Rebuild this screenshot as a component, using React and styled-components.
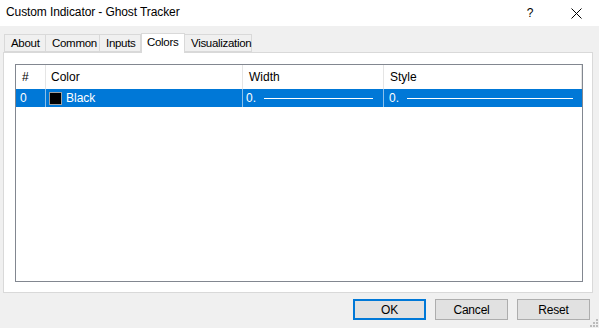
import React from "react"
import styled, { createGlobalStyle } from "styled-components"

const GlobalStyle = createGlobalStyle`
  html, body {
    margin: 0;
    padding: 0;
    background: #f0f0f0;
  }
  body {
    font-family: "Liberation Sans", Arial, sans-serif;
    font-size: 12px;
    color: #000;
  }
`

const Window = styled.div`
  position: relative;
  width: 599px;
  height: 328px;
  display: flex;
  flex-direction: column;
  background: #f0f0f0;
  overflow: hidden;
`

const TitleBar = styled.div`
  height: 26px;
  flex: none;
  display: flex;
  align-items: center;
  background: #fff;
  padding-left: 6px;
`

const TitleText = styled.div`
  flex: 1;
  font-size: 12px;
  letter-spacing: -0.1px;
  padding-bottom: 2px;
`

const CaptionButton = styled.div`
  width: ${p => p.w}px;
  height: 26px;
  display: flex;
  align-items: center;
  justify-content: center;
  font-size: 12px;
`

const Body = styled.div`
  flex: 1;
  display: flex;
  flex-direction: column;
  padding: 7px 6px 0 3px;
`

const TabStrip = styled.div`
  display: flex;
  align-items: flex-end;
  height: 19px;
  padding-left: 1px;
  position: relative;
  z-index: 1;
`

const Tab = styled.div`
  width: ${p => p.w}px;
  height: ${p => (p.active ? 20 : 18)}px;
  margin-bottom: ${p => (p.active ? -1 : 0)}px;
  box-sizing: border-box;
  border: 1px solid #d9d9d9;
  border-bottom: ${p => (p.active ? "none" : "1px solid #d9d9d9")};
  border-left: ${p => (p.first || p.active ? "1px solid #d9d9d9" : "none")};
  background: ${p => (p.active ? "#fff" : "#f0f0f0")};
  padding-left: ${p => (p.active ? 5 : 6)}px;
  padding-top: 2px;
  font-size: 11.5px;
  letter-spacing: -0.3px;
  white-space: nowrap;
`

const TabPanel = styled.div`
  height: 241px;
  box-sizing: border-box;
  border: 1px solid #d9d9d9;
  background: #fff;
  padding: 11px 10px 10px 11px;
  display: flex;
`

const ListBox = styled.div`
  flex: 1;
  border: 1px solid #828790;
  background: #fff;
  display: flex;
  flex-direction: column;
`

const Row = styled.div`
  display: grid;
  grid-template-columns: 30px 197px 141px 198px;
  height: ${p => p.h}px;
  background: ${p => (p.selected ? "#0078d7" : "#fff")};
  color: ${p => (p.selected ? "#fff" : "#000")};
`

const HeaderCell = styled.div`
  display: flex;
  align-items: center;
  padding-left: ${p => p.pad}px;
  border-right: 1px solid #e5e5e5;
  padding-bottom: 1px;
`

const Cell = styled.div`
  display: flex;
  align-items: center;
  gap: 4px;
  padding-left: ${p => p.pad}px;
  padding-right: ${p => p.padR || 0}px;
  border-right: 1px solid ${p => (p.last ? "transparent" : "#8cc0ea")};
  overflow: hidden;
`

const Swatch = styled.span`
  width: 11px;
  height: 11px;
  border: 1px solid #a0a0a0;
  background: ${p => p.color};
  flex: none;
`

const LineSample = styled.span`
  flex: 1;
  height: 1px;
  background: #fff;
  margin-left: 4px;
`

const Footer = styled.div`
  flex: 1;
  display: flex;
  justify-content: flex-end;
  align-items: flex-start;
  gap: 9px;
  padding: 6px 3px 0 0;
`

const Button = styled.button`
  width: 73px;
  height: 21px;
  box-sizing: border-box;
  background: #e1e1e1;
  border: ${p => (p.primary ? "2px solid #0078d7" : "1px solid #adadad")};
  font-family: "Liberation Sans", Arial, sans-serif;
  font-size: 12px;
  color: #000;
  padding: 0;
  letter-spacing: -0.2px;
`

const Grip = styled.svg`
  position: absolute;
  right: 1px;
  bottom: 1px;
`

const tabs = [
  { label: "About", w: 42 },
  { label: "Common", w: 54 },
  { label: "Inputs", w: 41 },
  { label: "Colors", w: 44, active: true },
  { label: "Visualization", w: 67 },
]

const headers = [
  { label: "#", pad: 6 },
  { label: "Color", pad: 5 },
  { label: "Width", pad: 6 },
  { label: "Style", pad: 6 },
]

export default function App() {
  return (
    <Window>
      <GlobalStyle />
      <TitleBar>
        <TitleText>Custom Indicator - Ghost Tracker</TitleText>
        <CaptionButton w={46}>?</CaptionButton>
        <CaptionButton w={46}>
          <svg width="11" height="11" viewBox="0 0 11 11">
            <path d="M0.5 0.5 L10.5 10.5 M10.5 0.5 L0.5 10.5" stroke="#000" strokeWidth="1" />
          </svg>
        </CaptionButton>
      </TitleBar>
      <Body>
        <TabStrip>
          {tabs.map((t, i) => (
            <Tab key={t.label} w={t.w} active={t.active} first={i === 0}>
              {t.label}
            </Tab>
          ))}
        </TabStrip>
        <TabPanel>
          <ListBox>
            <Row h={24}>
              {headers.map(h => (
                <HeaderCell key={h.label} pad={h.pad}>
                  {h.label}
                </HeaderCell>
              ))}
            </Row>
            <Row h={18} selected>
              <Cell pad={4}>0</Cell>
              <Cell pad={3}>
                <Swatch color="#000" />
                Black
              </Cell>
              <Cell pad={3} padR={10}>
                0.
                <LineSample />
              </Cell>
              <Cell pad={5} padR={8} last>
                0.
                <LineSample />
              </Cell>
            </Row>
          </ListBox>
        </TabPanel>
        <Footer>
          <Button primary>OK</Button>
          <Button>Cancel</Button>
          <Button>Reset</Button>
        </Footer>
      </Body>
      <Grip width="10" height="10" viewBox="0 0 10 10">
        {[
          [8, 0], [8, 3], [5, 3], [8, 6], [5, 6], [2, 6],
        ].map(([x, y]) => (
          <rect key={`${x}-${y}`} x={x} y={y + 2} width="2" height="2" fill="#bcbcbc" />
        ))}
      </Grip>
    </Window>
  )
}
